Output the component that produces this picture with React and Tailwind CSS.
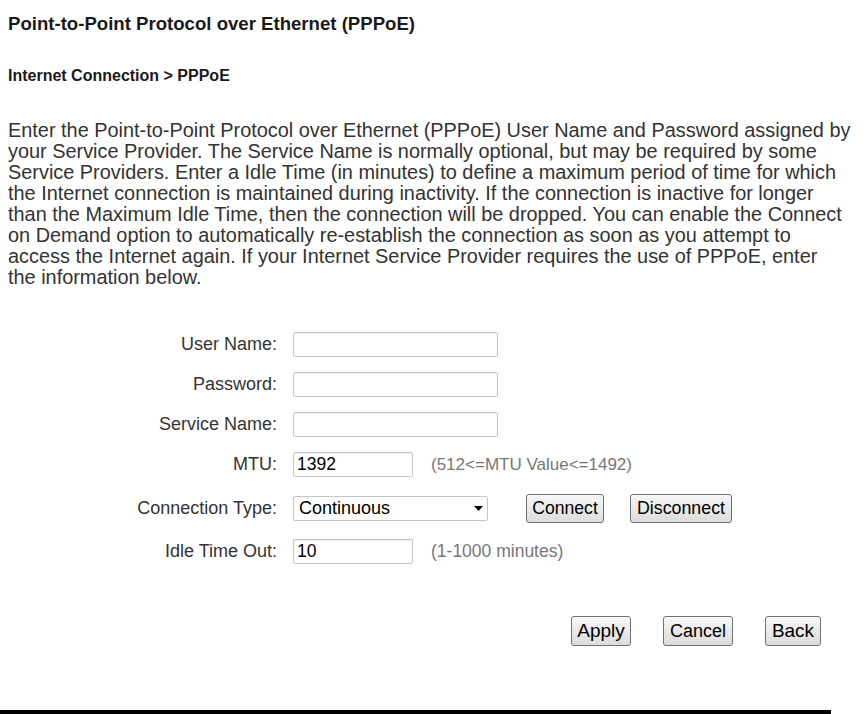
import React from "react";

const font = { fontFamily: '"Liberation Sans", Arial, sans-serif' };

function Label({ children }) {
  return <div className="w-[277px] text-right text-[#333] text-[18px] leading-[25px]">{children}</div>;
}

function TextInput({ value = "", w = "w-[205px]" }) {
  return (
    <div
      className={
        w +
        " h-[25px] border border-[#c6c6c6] rounded-[2px] bg-white shadow-[inset_0_1px_1px_rgba(0,0,0,0.08)] flex items-center pl-[3px] text-[17.5px] leading-[21px] text-black"
      }
    >
      {value}
    </div>
  );
}

function Btn({ children, className = "" }) {
  return (
    <div
      className={
        "border border-[#6f6f6f] rounded-[3px] bg-[linear-gradient(#f7f7f7,#dcdcdc)] flex items-center justify-center text-black shadow-[inset_0_1px_0_#fff] " +
        className
      }
    >
      {children}
    </div>
  );
}

export default function App() {
  return (
    <div className="w-[864px] h-[714px] bg-white relative overflow-hidden" style={font}>
      <div className="pl-[8px] pt-[11px]">
        <div className="text-[18.6px] font-bold text-[#1a1a1a] leading-[26px]">
          Point-to-Point Protocol over Ethernet (PPPoE)
        </div>
        <div className="mt-[29px] text-[16px] font-bold text-[#1a1a1a] leading-[20px]">
          Internet Connection &gt; PPPoE
        </div>
        <div className="mt-[34px] text-[19.9px] leading-[21px] text-[#333] whitespace-nowrap">
          Enter the Point-to-Point Protocol over Ethernet (PPPoE) User Name and Password assigned by
          <br />
          your Service Provider. The Service Name is normally optional, but may be required by some
          <br />
          Service Providers. Enter a Idle Time (in minutes) to define a maximum period of time for which
          <br />
          the Internet connection is maintained during inactivity. If the connection is inactive for longer
          <br />
          than the Maximum Idle Time, then the connection will be dropped. You can enable the Connect
          <br />
          on Demand option to automatically re-establish the connection as soon as you attempt to
          <br />
          access the Internet again. If your Internet Service Provider requires the use of PPPoE, enter
          <br />
          the information below.
        </div>
      </div>

      <div className="mt-[44px] flex flex-col">
        <div className="flex items-center h-[25px] gap-[16px]">
          <Label>User Name:</Label>
          <TextInput />
        </div>
        <div className="flex items-center h-[25px] gap-[16px] mt-[15px]">
          <Label>Password:</Label>
          <TextInput />
        </div>
        <div className="flex items-center h-[25px] gap-[16px] mt-[15px]">
          <Label>Service Name:</Label>
          <TextInput />
        </div>
        <div className="flex items-center h-[25px] gap-[16px] mt-[15px]">
          <Label>MTU:</Label>
          <TextInput value="1392" w="w-[120px]" />
          <span className="ml-[2px] text-[17px] text-[#777]">(512&lt;=MTU Value&lt;=1492)</span>
        </div>
        <div className="flex items-center h-[29px] mt-[17px]">
          <Label>Connection Type:</Label>
          <div className="ml-[16px] w-[195px] h-[25px] border border-[#c6c6c6] rounded-[2px] bg-white flex items-center justify-between pl-[5px] pr-[4px] text-[18px] text-black">
            <span>Continuous</span>
            <svg width="9" height="5" viewBox="0 0 9 5">
              <path d="M0 0 L9 0 L4.5 5 Z" fill="#000" />
            </svg>
          </div>
          <Btn className="ml-[38px] w-[78px] h-[29px] text-[17.6px]">Connect</Btn>
          <Btn className="ml-[26px] w-[102px] h-[29px] text-[17.8px]">Disconnect</Btn>
        </div>
        <div className="flex items-center h-[25px] gap-[16px] mt-[16px]">
          <Label>Idle Time Out:</Label>
          <TextInput value="10" w="w-[120px]" />
          <span className="ml-[2px] text-[17.5px] text-[#777]">(1-1000 minutes)</span>
        </div>
        <div className="flex mt-[52px] pl-[571px]">
          <Btn className="w-[60px] h-[30px] text-[19px]">Apply</Btn>
          <Btn className="ml-[32px] w-[70px] h-[30px] text-[18px]">Cancel</Btn>
          <Btn className="ml-[32px] w-[56px] h-[30px] text-[19px]">Back</Btn>
        </div>
      </div>

      <div className="absolute left-0 bottom-0 w-[831px] h-[4px] bg-black" />
    </div>
  );
}
